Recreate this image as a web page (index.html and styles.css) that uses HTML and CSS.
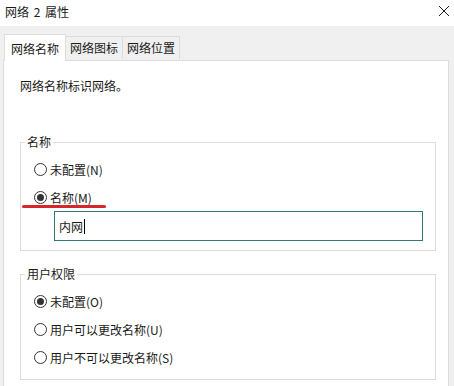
FILE: index.html
```html
<!DOCTYPE html>
<html lang="zh-CN">
<head>
    <meta charset="UTF-8">
    <title>网络 2 属性</title>
    <link rel="stylesheet" href="styles.css">
</head>
<body>
    <div class="titlebar">
        <span class="title">网络 2 属性</span>
        <svg class="close" width="12" height="12" viewBox="0 0 12 12">
            <path d="M1 1 L11 11 M11 1 L1 11" stroke="#1a1a1a" stroke-width="1" fill="none"/>
        </svg>
    </div>

    <div class="tabs">
        <div class="tab active">网络名称</div>
        <div class="tab">网络图标</div>
        <div class="tab">网络位置</div>
    </div>

    <div class="panel">
        <p class="desc">网络名称标识网络。</p>

        <fieldset class="group group-name">
            <legend>名称</legend>
            <div class="radio-row">
                <span class="radio"></span>
                <span>未配置(N)</span>
            </div>
            <div class="radio-row marked">
                <span class="radio checked"></span>
                <span>名称(M)</span>
                <span class="mark"></span>
            </div>
            <div class="textbox">
                <span>内网</span><span class="caret"></span>
            </div>
        </fieldset>

        <fieldset class="group group-rights">
            <legend>用户权限</legend>
            <div class="radio-row">
                <span class="radio checked"></span>
                <span>未配置(O)</span>
            </div>
            <div class="radio-row">
                <span class="radio"></span>
                <span>用户可以更改名称(U)</span>
            </div>
            <div class="radio-row">
                <span class="radio"></span>
                <span>用户不可以更改名称(S)</span>
            </div>
        </fieldset>
    </div>
</body>
</html>
```

FILE: styles.css
```css
:root {
    --window-bg: #f0f0f0;
    --line: #dcdcdc;
    --text: #1a1a1a;
    --font: "Noto Sans CJK SC", "Noto Sans", sans-serif;
}

* {
    margin: 0;
    padding: 0;
    box-sizing: border-box;
}

body {
    font-family: var(--font);
    font-size: 12px;
    color: var(--text);
    background: var(--window-bg);
    width: 454px;
    height: 386px;
    overflow: hidden;
}

.titlebar {
    height: 26px;
    background: #ffffff;
    display: flex;
    justify-content: space-between;
    align-items: center;
    padding: 0 4px 2px 5px;
}

.title {
    line-height: 16px;
    word-spacing: 2px;
}

.close {
    margin-top: -2px;
}

.tabs {
    display: flex;
    align-items: flex-end;
    padding: 7px 0 0 4px;
    height: 34px;
    position: relative;
    z-index: 1;
}

.tab {
    height: 23px;
    line-height: 22px;
    padding: 0 4px;
    border: 1px solid var(--line);
    border-bottom: none;
    border-left: none;
    background: #f0f0f0;
    margin-bottom: 1px;
}

.tab.active {
    height: 27px;
    line-height: 28px;
    padding: 0 6px;
    background: #ffffff;
    border-left: 1px solid var(--line);
    margin-bottom: -1px;
}

.panel {
    background: #ffffff;
    border: 1px solid var(--line);
    margin: 0 5px 0 3px;
    padding: 17px 12px 20px 16px;
    height: 340px;
}

.desc {
    line-height: 16px;
    margin-bottom: 40px;
}

.group {
    border: 1px solid var(--line);
    padding: 5px 12px 8px 13px;
    margin-bottom: 15px;
}

.group-name {
    padding-bottom: 9px;
}

.group legend {
    line-height: 16px;
    padding: 0 2px;
    margin-left: -9px;
}

.radio-row {
    height: 28px;
    display: flex;
    align-items: center;
    gap: 3px;
    position: relative;
}

.radio {
    width: 13px;
    height: 13px;
    border: 1px solid #333333;
    border-radius: 50%;
    background: #ffffff;
    display: flex;
    align-items: center;
    justify-content: center;
}

.radio.checked::after {
    content: "";
    width: 7px;
    height: 7px;
    border-radius: 50%;
    background: #333333;
}

/* red annotation stroke under the selected option */
.mark {
    position: absolute;
    left: -12px;
    top: 22px;
    width: 84px;
    height: 3px;
    border-radius: 2px;
    background: #d7262c;
}

.textbox {
    margin-left: 20px;
    width: 369px;
    height: 30px;
    border: 1px solid #2f7b79;
    display: flex;
    align-items: center;
    padding-left: 4px;
}

.caret {
    width: 1px;
    height: 15px;
    background: #000000;
    margin-left: 1px;
}
```
